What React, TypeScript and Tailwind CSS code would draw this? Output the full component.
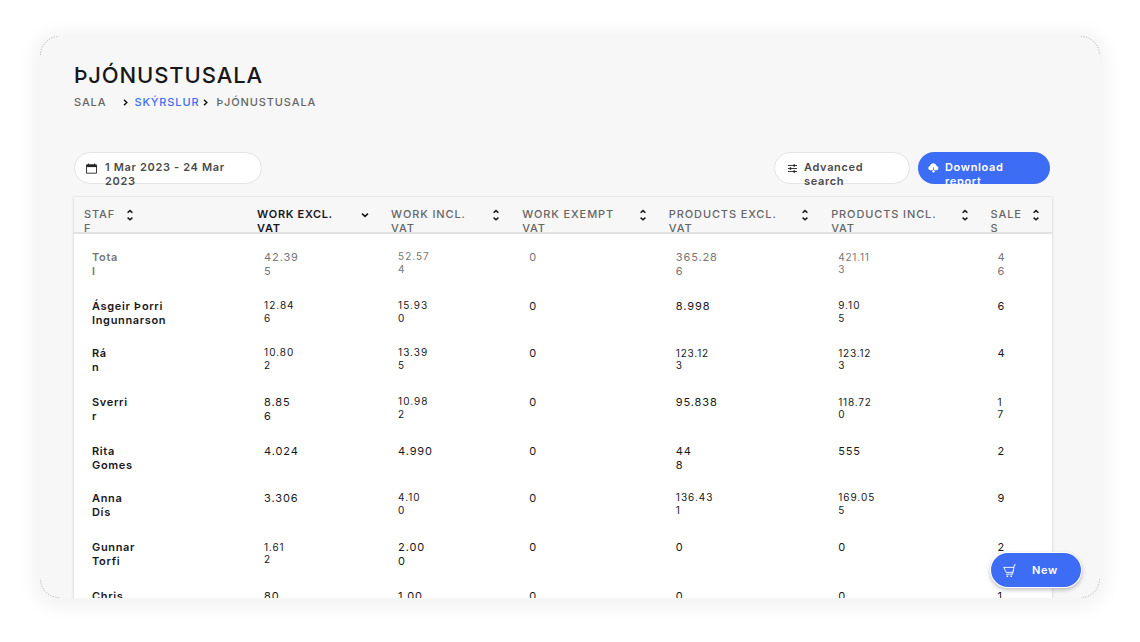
import { ReactNode } from "react";

type Size = "lg" | "md" | "sm";
type Cell = { lines: string[]; size?: Size };

const cellSize: Record<Size, string> = {
  lg: "pt-4 text-[11px] leading-[14px] tracking-[0.08em]",
  md: "pt-4 text-[10px] leading-[13px] tracking-[0.1em]",
  sm: "pt-[17px] text-[10px] leading-[12px] tracking-[0.08em]",
};

const columns = [
  { lines: ["STAF", "F"], width: "w-[17.7%]", staff: true },
  { lines: ["WORK EXCL.", "VAT"], width: "w-[13.7%]", active: true },
  { lines: ["WORK INCL.", "VAT"], width: "w-[13.4%]" },
  { lines: ["WORK EXEMPT", "VAT"], width: "w-[15%]" },
  { lines: ["PRODUCTS EXCL.", "VAT"], width: "w-[16.6%]" },
  { lines: ["PRODUCTS INCL.", "VAT"], width: "w-[16.3%]" },
  { lines: ["SALE", "S"], width: "w-[7.3%]" },
];

const c = (text: string, size: Size = "lg"): Cell => ({
  lines: text.split("|"),
  size,
});

const rows: { name: string[]; cells: Cell[] }[] = [
  {
    name: ["Tota", "l"],
    cells: [c("42.39|5"), c("52.57|4", "md"), c("0"), c("365.28|6"), c("421.11|3", "sm"), c("4|6")],
  },
  {
    name: ["Ásgeir Þorri", "Ingunnarson"],
    cells: [c("12.84|6", "md"), c("15.93|0", "md"), c("0"), c("8.998"), c("9.10|5", "md"), c("6")],
  },
  {
    name: ["Rá", "n"],
    cells: [c("10.80|2", "md"), c("13.39|5", "md"), c("0"), c("123.12|3", "sm"), c("123.12|3", "sm"), c("4")],
  },
  {
    name: ["Sverri", "r"],
    cells: [c("8.85|6"), c("10.98|2", "md"), c("0"), c("95.838"), c("118.72|0", "sm"), c("1|7", "sm")],
  },
  {
    name: ["Rita", "Gomes"],
    cells: [c("4.024"), c("4.990"), c("0"), c("44|8"), c("555"), c("2")],
  },
  {
    name: ["Anna", "Dís"],
    cells: [c("3.306"), c("4.10|0", "md"), c("0"), c("136.43|1", "md"), c("169.05|5", "md"), c("9")],
  },
  {
    name: ["Gunnar", "Torfi"],
    cells: [c("1.61|2", "sm"), c("2.00|0"), c("0"), c("0"), c("0"), c("2")],
  },
  {
    name: ["Chris"],
    cells: [c("80"), c("1.00"), c("0"), c("0"), c("0"), c("1")],
  },
];

function Lines({ lines }: { lines: string[] }) {
  return (
    <span className="block">
      {lines.map((line, i) => (
        <span key={i} className="block whitespace-nowrap">
          {line}
        </span>
      ))}
    </span>
  );
}

function Chevron() {
  return (
    <svg className="h-[7px] w-[5px] shrink-0" viewBox="0 0 5 7" fill="none" stroke="#18181b" strokeWidth="1.5">
      <path d="M1 0.8 3.8 3.5 1 6.2" />
    </svg>
  );
}

function SortIcon() {
  return (
    <svg className="h-3 w-2 shrink-0" viewBox="0 0 8 12" fill="none" stroke="#18181b" strokeWidth="1.5">
      <path d="M1.6 3.8 4 1.6 6.4 3.8" />
      <path d="M1.6 8.6 4 10.8 6.4 8.6" />
    </svg>
  );
}

function SortDownIcon() {
  return (
    <svg className="h-3 w-2 shrink-0" viewBox="0 0 8 12" fill="none" stroke="#18181b" strokeWidth="1.6">
      <path d="M1 4.6 4 7.4 7 4.6" />
    </svg>
  );
}

function CalendarIcon() {
  return (
    <svg className="h-[11px] w-[11px] shrink-0" viewBox="0 0 11 11" fill="none" stroke="#27272a">
      <path d="M0.5 2h10v8.2h-10z" strokeWidth="0.9" />
      <path d="M0.5 2.8h10" strokeWidth="2.6" />
      <path d="M2.5 0.4v2M8.5 0.4v2" strokeWidth="0.8" />
    </svg>
  );
}

function SlidersIcon() {
  return (
    <svg className="h-[9px] w-[9px] shrink-0" viewBox="0 0 9 9" fill="none" stroke="#27272a">
      <path d="M0 1.5h9M0 4.5h9M0 7.5h9" strokeWidth="0.9" />
      <path d="M6.2 0.3v2.4M2.5 3.3v2.4M6.2 6.3v2.4" strokeWidth="1.5" />
    </svg>
  );
}

function CloudIcon() {
  return (
    <svg className="h-[10px] w-[11px] shrink-0" viewBox="0 0 11 10" fill="none">
      <path
        d="M2.4 7.2A2.2 2.2 0 0 1 1.8 2.9 3.6 3.6 0 0 1 8.7 2.9 2.2 2.2 0 0 1 8.6 7.2z"
        fill="#fff"
      />
      <path d="M5.5 4.4v2.8" stroke="#3d6cf5" strokeWidth="0.8" />
      <path d="M5.5 7.2v2M4.1 8 5.5 9.4 6.9 8" stroke="#fff" />
    </svg>
  );
}

function CartIcon() {
  return (
    <svg className="h-[13px] w-[13px] shrink-0" viewBox="0 0 13 13" fill="none" stroke="#fff" strokeWidth="0.9">
      <path d="M12.8 0.8h-1.4L10.2 7.4" />
      <path d="M0.4 3.4h10.6M1 3.4l2 5h6.8l0.6-2.6" />
      <path d="M3 10.2h6.8V8.2" />
      <path d="M3.6 12.2h1.6M7.4 12.2H9" strokeWidth="1.4" />
    </svg>
  );
}

function Corner({ className }: { className: string }) {
  return (
    <svg className={`absolute h-[19px] w-[19px] ${className}`} viewBox="0 0 19 19" fill="none">
      <path d="M0.5 19A18.5 18.5 0 0 1 19 0.5" stroke="#a8a8a8" strokeDasharray="1 1.6" />
    </svg>
  );
}

function Crumb({ children }: { children: ReactNode }) {
  return <li className="flex items-center">{children}</li>;
}

export default function App() {
  return (
    <div className="h-screen bg-white px-10 pt-9 pb-11 font-['Inter',sans-serif] text-[11px] leading-[14px] tracking-[0.06em] text-[#18181b]">
      <main className="relative flex h-full flex-col rounded-[20px] bg-[#f7f7f7] shadow-[0_3px_16px_9px_rgba(0,0,0,0.045)]">
        <Corner className="top-0 left-0" />
        <Corner className="top-0 right-0 rotate-90" />
        <Corner className="right-0 bottom-0 rotate-180" />
        <Corner className="bottom-0 left-0 -rotate-90" />

        {/* Title and breadcrumb */}
        <header className="px-[34px] pt-6">
          <h1 className="text-[22px] leading-[30px] font-medium tracking-[0.04em]">ÞJÓNUSTUSALA</h1>
          <nav aria-label="Breadcrumb" className="mt-[5px]">
            <ol className="flex items-center font-medium tracking-[0.08em] text-[#666666]">
              <Crumb>
                <a href="#sala" className="mr-[17px]">SALA</a>
                <Chevron />
              </Crumb>
              <Crumb>
                <a href="#skyrslur" className="mr-1 ml-1.5 text-[#3d6cf5]">SKÝRSLUR</a>
                <Chevron />
              </Crumb>
              <Crumb>
                <span className="ml-2">ÞJÓNUSTUSALA</span>
              </Crumb>
            </ol>
          </nav>
        </header>

        {/* Toolbar */}
        <div className="mt-[43px] flex h-8 gap-2 pr-[50px] pl-[34px] font-semibold text-[#4b4b4b]">
          <button
            type="button"
            className="mr-auto flex h-8 w-[188px] items-start gap-2 rounded-full border border-[#e4e4e4] bg-white pt-[7px] pl-[11px] text-left"
          >
            <span className="pt-[3px]"><CalendarIcon /></span>
            <Lines lines={["1 Mar 2023 - 24 Mar", "2023"]} />
          </button>
          <button
            type="button"
            className="flex h-8 w-[136px] items-start gap-[7px] rounded-full border border-[#e4e4e4] bg-white pt-[7px] pl-[13px] text-left"
          >
            <span className="pt-1"><SlidersIcon /></span>
            <Lines lines={["Advanced", "search"]} />
          </button>
          <button
            type="button"
            className="flex h-8 w-[132px] items-start gap-[6px] overflow-hidden rounded-full bg-[#3d6cf5] pt-2 pl-[10px] text-left text-white"
          >
            <span className="pt-[3px]"><CloudIcon /></span>
            <Lines lines={["Download", "report"]} />
          </button>
        </div>

        {/* Report table */}
        <div className="mt-3 min-h-0 flex-1 overflow-hidden pt-px pr-12 pl-[34px]">
          <table className="w-full table-fixed border-collapse bg-white shadow-[0_0_3px_rgba(0,0,0,0.18)]">
            <thead className="bg-[#f7f7f7]">
              <tr className="border-b-2 border-[#e2e2e2]">
                {columns.map((col) => (
                  <th
                    key={col.lines[0]}
                    scope="col"
                    className={`${col.width} p-0 text-left ${
                      col.active ? "font-semibold text-[#18181b]" : "font-medium tracking-[0.08em] text-[#666666]"
                    }`}
                  >
                    <button
                      type="button"
                      className={`flex h-[35px] w-full items-start overflow-hidden pt-2.5 pl-2.5 text-left ${
                        col.staff ? "gap-[11px]" : "justify-between pr-3"
                      }`}
                    >
                      <Lines lines={col.lines} />
                      <span className="pt-0.5">{col.active ? <SortDownIcon /> : <SortIcon />}</span>
                    </button>
                  </th>
                ))}
              </tr>
            </thead>
            <tbody>
              {rows.map((row) => (
                <tr
                  key={row.name[0]}
                  className="h-[49px] align-top first:h-[50px] first:text-[#777777] nth-[3n+2]:h-[47px]"
                >
                  <th scope="row" className="p-0 pt-4 pl-[18px] text-left font-semibold">
                    <Lines lines={row.name} />
                  </th>
                  {row.cells.map((cell, i) => (
                    <td key={i} className={`p-0 pl-[17px] ${cellSize[cell.size ?? "lg"]}`}>
                      <Lines lines={cell.lines} />
                    </td>
                  ))}
                </tr>
              ))}
            </tbody>
          </table>
        </div>

        {/* Floating action */}
        <button
          type="button"
          className="absolute right-[19px] bottom-[11px] flex h-[34px] w-[90px] items-center gap-4 rounded-full bg-[#3d6cf5] pl-3 font-semibold text-white shadow-[0_0_0_1px_#ffffff,0_2px_4px_1px_rgba(0,0,0,0.25)]"
        >
          <CartIcon />
          New
        </button>
      </main>
    </div>
  );
}
